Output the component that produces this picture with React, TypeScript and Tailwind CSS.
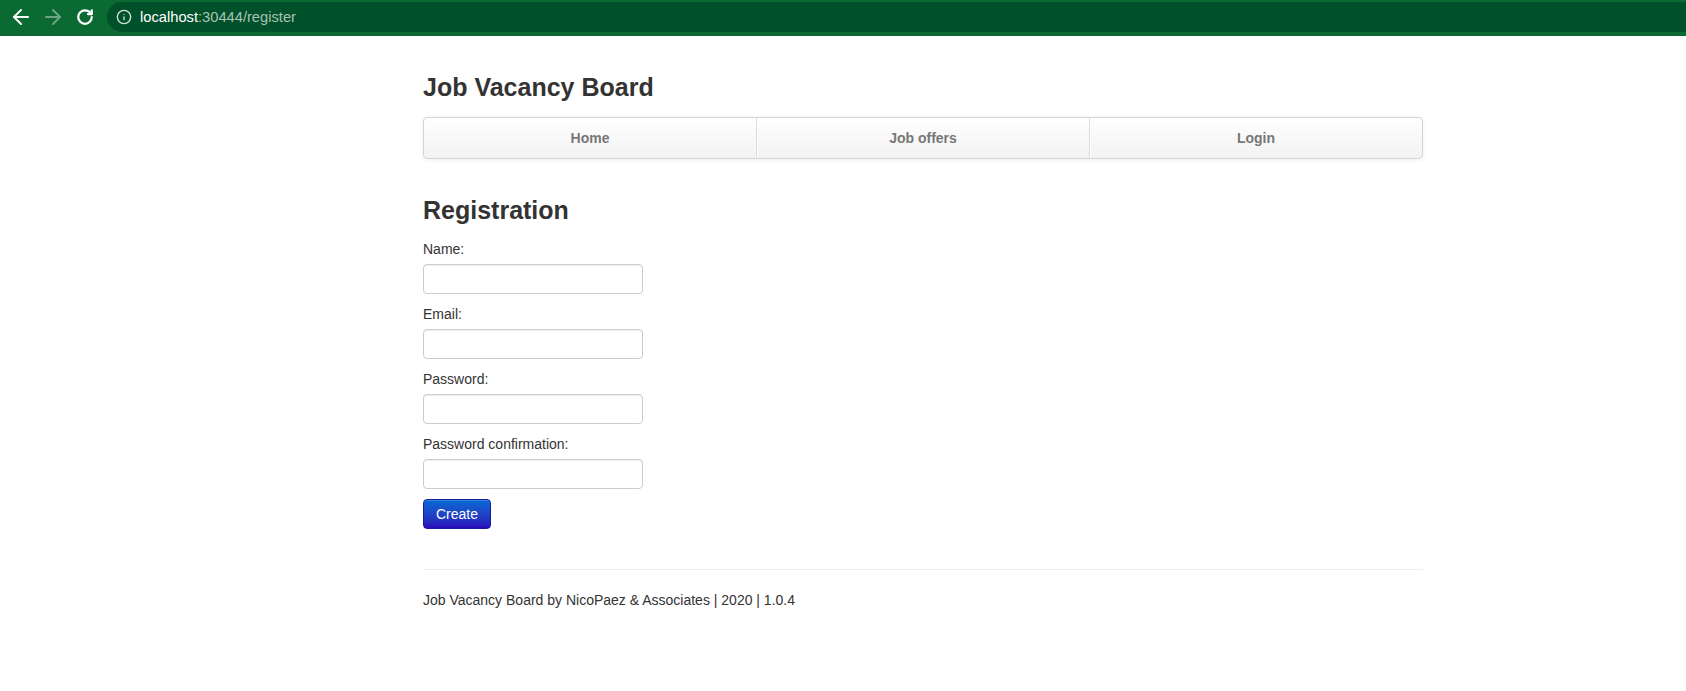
import React from 'react';
import { ArrowLeft, ArrowRight, RotateCw, Info } from 'lucide-react';

const fields = ['Name:', 'Email:', 'Password:', 'Password confirmation:'];

const navItems = ['Home', 'Job offers', 'Login'];

const BrowserBar: React.FC = () => (
  <div className="flex h-[36px] items-start bg-[#0b6a31] pt-[2px]">
    <div className="flex h-[30px] items-center">
      <ArrowLeft className="ml-[9px] text-white" size={24} strokeWidth={2} />
      <ArrowRight className="ml-[8px] text-[#6fa585]" size={24} strokeWidth={2} />
      <RotateCw className="ml-[11px] text-white" size={18} strokeWidth={3} />
    </div>
    <div className="ml-[13px] flex h-[30px] flex-1 items-center rounded-l-full bg-[#00502a]">
      <Info className="ml-[9px] text-[#d6e2db]" size={16} strokeWidth={2} />
      <span className="ml-[8px] font-['Liberation_Sans',sans-serif] text-[14.7px] leading-none">
        <span className="text-white">localhost</span>
        <span className="text-[#a9c2b4]">:30444/register</span>
      </span>
    </div>
  </div>
);

const App: React.FC = () => {
  return (
    <div className="min-h-screen bg-white font-['Liberation_Sans',Arial,sans-serif] text-[14px] text-[#333]">
      <BrowserBar />
      <div className="pl-[423px] pt-[31px]">
        <div className="w-[1000px]">
          <h3 className="text-[25px] font-bold leading-[40px]">Job Vacancy Board</h3>

          <div className="mt-[10px] flex h-[42px] rounded-[4px] border border-[#d4d4d4] bg-gradient-to-b from-white to-[#f2f2f2] shadow-[0_1px_4px_rgba(0,0,0,0.065)]">
            {navItems.map((item, i) => (
              <div
                key={item}
                className={`flex flex-1 items-center justify-center text-[14px] font-bold text-[#777] ${
                  i > 0 ? 'border-l border-[#dcdcdc] shadow-[inset_1px_0_0_#ffffff]' : ''
                }`}
              >
                {item}
              </div>
            ))}
          </div>

          <h3 className="mt-[31px] text-[25px] font-bold leading-[40px]">Registration</h3>

          <form className="mt-[9px]">
            {fields.map((label) => (
              <div key={label}>
                <label className="mb-[5px] block leading-[20px]">{label}</label>
                <input
                  type="text"
                  className="mb-[10px] block h-[30px] w-[220px] rounded-[4px] border border-[#cccccc] bg-white px-[6px] shadow-[inset_0_1px_1px_rgba(0,0,0,0.075)] outline-none"
                />
              </div>
            ))}
            <button
              type="button"
              className="h-[30px] rounded-[4px] border border-[#1a1aa0] bg-gradient-to-b from-[#0069d2] to-[#2a04bb] px-[12px] text-[14px] leading-[20px] text-white shadow-[inset_0_1px_0_rgba(255,255,255,0.2)]"
            >
              Create
            </button>
          </form>

          <hr className="mt-[40px] border-0 border-t border-[#eeeeee]" />

          <p className="mt-[20px] leading-[20px]">
            Job Vacancy Board by NicoPaez &amp; Associates | 2020 | 1.0.4
          </p>
        </div>
      </div>
    </div>
  );
};

export default App;
